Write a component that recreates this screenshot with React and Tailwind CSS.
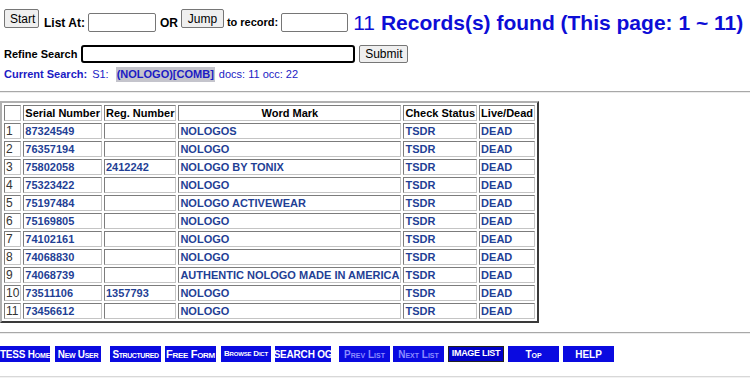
import React from 'react'

const rows = [
  ['1', '87324549', '', 'NOLOGOS'],
  ['2', '76357194', '', 'NOLOGO'],
  ['3', '75802058', '2412242', 'NOLOGO BY TONIX'],
  ['4', '75323422', '', 'NOLOGO'],
  ['5', '75197484', '', 'NOLOGO ACTIVEWEAR'],
  ['6', '75169805', '', 'NOLOGO'],
  ['7', '74102161', '', 'NOLOGO'],
  ['8', '74068830', '', 'NOLOGO'],
  ['9', '74068739', '', 'AUTHENTIC NOLOGO MADE IN AMERICA'],
  ['10', '73511106', '1357793', 'NOLOGO'],
  ['11', '73456612', '', 'NOLOGO'],
]

const navButtons = [
  { label: 'TESS Home', w: 'w-[50px]', ml: 'ml-0', text: 'text-[10px] [font-variant:small-caps] tracking-[-0.2px]' },
  { label: 'New User', w: 'w-[46px]', ml: 'ml-[5px]', text: 'text-[10px] [font-variant:small-caps] tracking-[-0.3px]' },
  { label: 'Structured', w: 'w-[51px]', ml: 'ml-[9px]', text: 'text-[10px] [font-variant:small-caps] tracking-[-0.4px]' },
  { label: 'Free Form', w: 'w-[51px]', ml: 'ml-[4px]', text: 'text-[11px] [font-variant:small-caps] tracking-[-0.3px]' },
  { label: 'Browse Dict', w: 'w-[50px]', ml: 'ml-[5px]', text: 'text-[8px] [font-variant:small-caps] tracking-[-0.2px]' },
  { label: 'SEARCH OG', w: 'w-[56px]', ml: 'ml-[4px]', text: 'text-[10px] tracking-[-0.2px]' },
  { label: 'Prev List', w: 'w-[51px]', ml: 'ml-[8px]', text: 'text-[10px] [font-variant:small-caps]', dim: true },
  { label: 'Next List', w: 'w-[51px]', ml: 'ml-[3px]', text: 'text-[10px] [font-variant:small-caps]', dim: true },
  { label: 'IMAGE LIST', w: 'w-[56px]', ml: 'ml-[4px]', text: 'text-[9px] tracking-[-0.3px]', dark: true },
  { label: 'Top', w: 'w-[51px]', ml: 'ml-[4px]', text: 'text-[10px] [font-variant:small-caps]' },
  { label: 'HELP', w: 'w-[51px]', ml: 'ml-[4px]', text: 'text-[10px]' },
]

const cell = 'border-t border-l border-r border-b border-t-[#7c7c7c] border-l-[#7c7c7c] border-r-[#c4c4c4] border-b-[#c4c4c4] px-[1px] py-0 leading-[14px] whitespace-nowrap'

function ClassicButton({ children, className = '' }) {
  return (
    <button className={`h-[19px] px-[5px] bg-[#efefef] border border-[#767676] rounded-[2px] text-[12px] leading-[14px] text-black ${className}`}>
      {children}
    </button>
  )
}

export default function App() {
  return (
    <div className="w-[750px] h-[381px] bg-white overflow-hidden font-['Liberation_Sans',Arial,sans-serif] text-black">
      <div className="pl-[4px]">
        {/* Top paging row */}
        <div className="flex items-center h-[27px] mt-[9px]">
          <ClassicButton className="mb-2 w-[35px]">Start</ClassicButton>
          <span className="ml-[5px] text-[12px] font-bold">List At:</span>
          <input className="ml-[3px] w-[68px] h-[19px] border border-[#767676] rounded-[2px]" />
          <span className="ml-[4px] text-[12px] font-bold">OR</span>
          <ClassicButton className="mb-2 ml-[3px] w-[43px] h-[18px]">Jump</ClassicButton>
          <span className="ml-[3px] text-[11px] font-bold">to record:</span>
          <input className="ml-[3px] w-[67px] h-[19px] border border-[#767676] rounded-[2px]" />
          <span className="ml-[5px] text-[21px] leading-[24px] text-[#0d0dd6] whitespace-nowrap">
            11 <span className="font-bold">Records(s) found (This page: 1 ~ 11)</span>
          </span>
        </div>

        {/* Refine search */}
        <div className="flex items-center h-[18px] mt-[9px]">
          <span className="text-[11px] font-bold">Refine Search</span>
          <input className="ml-[4px] w-[274px] h-[18px] border-2 border-black rounded-[3px]" />
          <button className="ml-[4px] w-[49px] h-[18px] bg-[#efefef] border border-[#767676] rounded-[2px] text-[12px] leading-[14px]">
            Submit
          </button>
        </div>

        {/* Current search */}
        <div className="flex items-center h-[15px] mt-[4px] text-[11px] text-[#1b1bc4] whitespace-nowrap">
          <span className="font-bold">Current Search:</span>
          <span className="ml-[5px]">S1:</span>
          <span className="ml-[7px] px-[1px] bg-[#c4c4cc] font-bold leading-[15px]">(NOLOGO)[COMB]</span>
          <span className="ml-[4px]">docs: 11 occ: 22</span>
        </div>
      </div>

      <div className="mt-[9px] border-t border-t-[#a8a8a8] border-b border-b-[#ececec]" />

      {/* Results table */}
      <table className="mt-[8px] ml-0 border-separate border-spacing-[2px] border-2 border-t-[#b0b0b0] border-l-[#b0b0b0] border-r-[#3a3a3a] border-b-[#3a3a3a] text-[11px]">
        <thead>
          <tr className="font-bold text-black">
            <th className={`${cell} w-[17px]`}></th>
            <th className={`${cell} text-left`}>Serial Number</th>
            <th className={`${cell} text-left`}>Reg. Number</th>
            <th className={`${cell} text-center`}>Word Mark</th>
            <th className={`${cell} text-left`}>Check Status</th>
            <th className={`${cell} text-left`}>Live/Dead</th>
          </tr>
        </thead>
        <tbody>
          {rows.map(([n, serial, reg, mark]) => (
            <tr key={n}>
              <td className={`${cell} text-[#333] font-normal text-[12px]`}>{n}</td>
              <td className={`${cell} font-bold text-[#1f3f95]`}>{serial}</td>
              <td className={`${cell} font-bold text-[#1f3f95]`}>{reg}</td>
              <td className={`${cell} font-bold text-[#1f3f95]`}>{mark}</td>
              <td className={`${cell} font-bold text-[#1f3f95]`}>TSDR</td>
              <td className={`${cell} font-bold text-[#1f3f95]`}>DEAD</td>
            </tr>
          ))}
        </tbody>
      </table>

      <div className="mt-[9px] border-t border-t-[#a8a8a8] border-b border-b-[#ececec]" />

      {/* Bottom navigation */}
      <div className="flex mt-[12px]">
        {navButtons.map((b) => (
          <div
            key={b.label}
            className={`${b.w} ${b.ml} h-[16px] flex items-center justify-center font-bold whitespace-nowrap overflow-hidden ${b.text} ${
              b.dark ? 'bg-[#0000c8] border border-[#222]' : 'bg-[#0a0ae0]'
            } ${b.dim ? 'text-[#8c8cff]' : 'text-white'}`}
          >
            {b.label}
          </div>
        ))}
      </div>

      <div className="mt-[14px] border-t border-t-[#d8d8d8] border-b border-b-[#f2f2f2]" />
    </div>
  )
}
